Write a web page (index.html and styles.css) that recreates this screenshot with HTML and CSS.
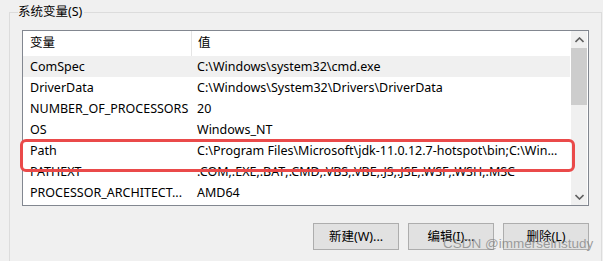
FILE: index.html
```html
<!DOCTYPE html>
<html lang="zh-CN">
<head>
    <meta charset="UTF-8">
    <title>系统变量</title>
    <link rel="stylesheet" href="styles.css">
</head>
<body>
    <div class="group">
        <div class="group-title">系统变量(S)</div>

        <div class="list">
            <div class="table">
                <div class="row head">
                    <div class="cell name">变量</div>
                    <div class="cell value">值</div>
                </div>
                <div class="row hover">
                    <div class="cell name">ComSpec</div>
                    <div class="cell value">C:\Windows\system32\cmd.exe</div>
                </div>
                <div class="row">
                    <div class="cell name">DriverData</div>
                    <div class="cell value">C:\Windows\System32\Drivers\DriverData</div>
                </div>
                <div class="row">
                    <div class="cell name">NUMBER_OF_PROCESSORS</div>
                    <div class="cell value">20</div>
                </div>
                <div class="row">
                    <div class="cell name">OS</div>
                    <div class="cell value">Windows_NT</div>
                </div>
                <div class="row">
                    <div class="cell name">Path</div>
                    <div class="cell value">C:\Program Files\Microsoft\jdk-11.0.12.7-hotspot\bin;C:\Win...</div>
                </div>
                <div class="row">
                    <div class="cell name">PATHEXT</div>
                    <div class="cell value">.COM;.EXE;.BAT;.CMD;.VBS;.VBE;.JS;.JSE;.WSF;.WSH;.MSC</div>
                </div>
                <div class="row">
                    <div class="cell name">PROCESSOR_ARCHITECT...</div>
                    <div class="cell value">AMD64</div>
                </div>
            </div>

            <!-- 滚动条 -->
            <div class="scrollbar">
                <div class="arrow">
                    <svg width="9" height="6" viewBox="0 0 9 6"><path d="M0.5 5 L4.5 1 L8.5 5" fill="none" stroke="#606060" stroke-width="1.6"/></svg>
                </div>
                <div class="thumb"></div>
                <div class="track"></div>
                <div class="arrow">
                    <svg width="9" height="6" viewBox="0 0 9 6"><path d="M0.5 1 L4.5 5 L8.5 1" fill="none" stroke="#606060" stroke-width="1.6"/></svg>
                </div>
            </div>
        </div>

        <div class="buttons">
            <div class="btn">新建(W)...</div>
            <div class="btn">编辑(I)...</div>
            <div class="btn">删除(L)</div>
        </div>
    </div>

    <!-- 标注框和水印 -->
    <div class="mark"></div>
    <div class="watermark">CSDN @immerseinstudy</div>
</body>
</html>
```

FILE: styles.css
```css
body {
    margin: 0;
    background: #f0f0f0;
    font-family: "Noto Sans", "Noto Sans CJK SC", sans-serif;
    font-size: 12.5px;
    color: #000;
    overflow: hidden;
    height: 261px;
}

.group {
    margin: 12px 0 0 9px;
    width: 593px;
    height: 249px;
    border: 1px solid #dcdcdc;
    border-bottom: none;
    box-sizing: border-box;
}

.group-title {
    display: inline-block;
    margin: -10px 0 0 8px;
    padding: 0 2px 0 0;
    background: #f0f0f0;
    line-height: 18px;
    vertical-align: top;
}

.list {
    display: flex;
    width: 567px;
    height: 176px;
    margin-left: 12px;
    border: 1px solid #828790;
    box-sizing: border-box;
    background: #fff;
}

.table {
    flex: 1;
}

.row {
    display: flex;
    height: 21px;
    line-height: 21px;
}

.row.head {
    height: 25px;
    line-height: 24px;
}

.row.hover {
    background: #f0f0f0;
}

.cell {
    white-space: nowrap;
    overflow: hidden;
}

.name {
    width: 161px;
    padding-left: 7px;
}

.value {
    flex: 1;
    padding-left: 6px;
}

.head .value {
    border-left: 1px solid #e5e5e5;
}

.scrollbar {
    width: 16px;
    margin-left: 1px;
    margin-right: 1px;
    background: #f0f0f0;
    display: flex;
    flex-direction: column;
}

.arrow {
    height: 17px;
    display: flex;
    align-items: center;
    justify-content: center;
}

.thumb {
    height: 57px;
    background: #cdcdcd;
}

.track {
    flex: 1;
}

.buttons {
    display: flex;
    justify-content: flex-end;
    gap: 9px;
    width: 567px;
    margin: 17px 0 0 12px;
}

.btn {
    width: 86px;
    height: 27px;
    line-height: 25px;
    box-sizing: border-box;
    border: 1px solid #adadad;
    background: #e1e1e1;
    text-align: center;
}

.mark {
    position: absolute;
    left: 20px;
    top: 139px;
    width: 555px;
    height: 33px;
    box-sizing: border-box;
    border: 3px solid #ea4a4a;
    border-radius: 6px;
}

.watermark {
    position: absolute;
    left: 443px;
    top: 236px;
    font-family: "Liberation Sans", Arial, sans-serif;
    font-size: 13.5px;
    color: rgba(130, 130, 130, 0.75);
    white-space: nowrap;
}
```
